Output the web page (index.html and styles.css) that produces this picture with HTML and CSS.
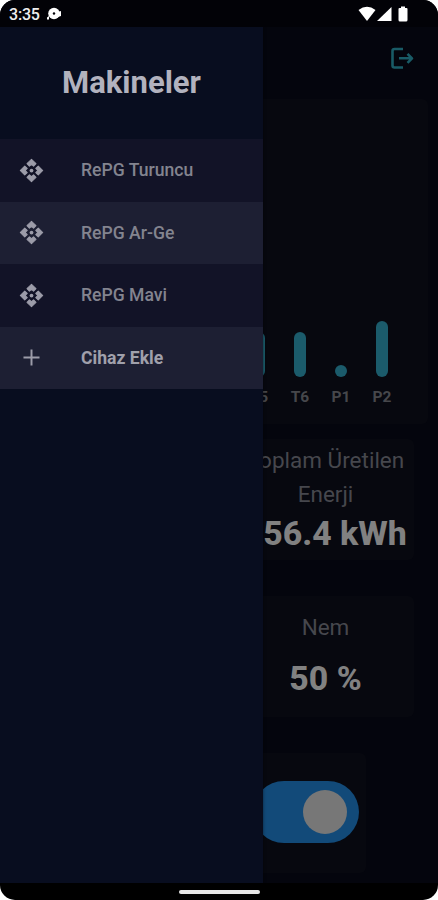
FILE: index.html
```html
<!DOCTYPE html>
<html lang="tr">
<head>
    <meta charset="UTF-8">
    <meta name="viewport" content="width=device-width, initial-scale=1.0">
    <title>Makineler</title>
    <link rel="stylesheet" href="styles.css">
</head>
<body>
    <svg class="sprite">
        <symbol id="icon-api" viewBox="0 0 24 24">
            <path stroke-width="1" stroke-linejoin="round" d="M12 1.2L16.3 5.500 14 7.900 12 6 10 7.900 7.700 5.500zM1.200 12L5.500 7.700 7.900 10 6 12 7.900 14 5.500 16.300zM22.800 12L18.500 16.300 16.100 14 18 12 16.100 10 18.500 7.700zM12 22.800L7.700 18.500 10 16.100 12 18 14 16.100 16.300 18.500z"/>
            <circle cx="12" cy="12" r="1.8" stroke="none"/>
        </symbol>
    </svg>

    <div class="phone">
        <div class="status-bar">
            <span class="clock">3:35</span>
            <svg class="notification" width="17" height="14" viewBox="0 0 17 14">
                <path d="M1 12.500v-2l2-1.500v3.500z"/>
                <circle cx="8" cy="6.500" r="5.800"/>
                <path d="M12 5l3-1v5l-3 1z"/>
                <circle class="hole" cx="8" cy="6.500" r="1.200"/>
            </svg>
            <svg class="signals" width="52" height="16" viewBox="0 0 52 16">
                <path d="M0.500 4Q9 -2.500 17.500 4L9 15z"/>
                <path d="M33.500 1v14h-14.500z"/>
                <path d="M41.500 2h1.500V0.500h4V2h1.500q1 0 1 1v11q0 1.500-1.500 1.500h-6q-1.500 0-1.500-1.500V3q0-1 1-1z"/>
            </svg>
        </div>

        <div class="screen">
            <div class="page">
                <div class="toolbar">
                    <svg class="logout" width="24" height="22" viewBox="0 0 24 22">
                        <path d="M13 2H4.500q-2 0-2 2v14.500q0 2 2 2H13M9 11.300h13M17.500 6.800l4.500 4.500-4.500 4.500"/>
                    </svg>
                </div>

                <div class="card chart">
                    <div class="column"><div class="bar" style="height: 45px"></div><span>T5</span></div>
                    <div class="column"><div class="bar" style="height: 45px"></div><span>T6</span></div>
                    <div class="column"><div class="bar" style="height: 12px"></div><span>P1</span></div>
                    <div class="column"><div class="bar" style="height: 56px"></div><span>P2</span></div>
                </div>

                <div class="card info energy">
                    <div class="label">Toplam Üretilen Enerji</div>
                    <div class="value">56.4 kWh</div>
                </div>

                <div class="card info humidity">
                    <div class="label">Nem</div>
                    <div class="value">50 %</div>
                </div>

                <div class="card power">
                    <div class="toggle"><div class="knob"></div></div>
                </div>
            </div>

            <div class="drawer">
                <h1>Makineler</h1>
                <div class="menu-item">
                    <svg class="icon"><use href="#icon-api"/></svg>
                    <span>RePG Turuncu</span>
                </div>
                <div class="menu-item">
                    <svg class="icon"><use href="#icon-api"/></svg>
                    <span>RePG Ar-Ge</span>
                </div>
                <div class="menu-item">
                    <svg class="icon"><use href="#icon-api"/></svg>
                    <span>RePG Mavi</span>
                </div>
                <div class="menu-item add">
                    <svg class="icon" viewBox="0 0 24 24"><path stroke-width="1.900" d="M12 4.300v15.400M4.300 12h15.400"/></svg>
                    <span>Cihaz Ekle</span>
                </div>
            </div>
        </div>

        <div class="nav-bar"><div class="handle"></div></div>
    </div>
</body>
</html>
```

FILE: styles.css
```css
* {
    box-sizing: border-box;
}
body {
    margin: 0;
    background: #fff;
    font-family: Roboto, sans-serif;
}
.sprite {
    display: none;
}
.phone {
    display: flex;
    flex-direction: column;
    width: 438px;
    height: 900px;
    background: #000;
    border-radius: 15px;
    overflow: hidden;
}

/* status bar */
.status-bar {
    display: flex;
    align-items: center;
    height: 27px;
    padding: 1px 28px 0 9px;
    background: #020207;
    color: #eee;
}
.clock {
    width: 31px;
    margin-right: 6px;
    font-size: 16px;
    font-weight: 500;
    letter-spacing: -0.2px;
}
.status-bar svg {
    fill: #fff;
}
.status-bar .hole {
    fill: #020207;
}
.signals {
    margin-left: auto;
}

.screen {
    position: relative;
    flex: 1;
    overflow: hidden;
    background: #04050d;
}
.page {
    display: flex;
    flex-direction: column;
    align-items: flex-end;
}
.toolbar {
    height: 72px;
    padding: 20px 24px 0 0;
}
.logout {
    fill: none;
    stroke: #195b66;
    stroke-width: 2.6;
    stroke-linejoin: round;
}
.card {
    background: #07080f;
    border-radius: 6px;
}

/* chart */
.chart {
    display: flex;
    justify-content: flex-end;
    align-items: flex-end;
    width: 418px;
    height: 325px;
    margin-right: 10px;
    padding: 0 25.5px 18px 0;
}
.column {
    display: flex;
    flex-direction: column;
    align-items: center;
    width: 41px;
    color: #46474b;
    font-size: 15.5px;
    font-weight: 700;
    line-height: 18px;
}
.bar {
    width: 12px;
    margin-bottom: 11px;
    background: #1b5b6b;
    border-radius: 6px;
}

/* info cards */
.info {
    width: 177px;
    height: 121px;
    margin-right: 24px;
    text-align: center;
}
.label {
    color: #46474d;
    font-size: 22.5px;
    line-height: 34px;
}
.value {
    color: #818181;
    font-size: 33.8px;
    font-weight: 800;
    line-height: 40px;
    white-space: nowrap;
}
.energy {
    margin-top: 15px;
    padding-top: 4px;
}
.energy .value {
    margin: 3px -6px 0 13px;
}
.humidity {
    margin-top: 36px;
    padding-top: 14px;
}
.humidity .value {
    margin-top: 15px;
}

.power {
    width: 120px;
    height: 120px;
    margin: 36px 72px 0 0;
    padding: 28px 7px;
}
.toggle {
    display: flex;
    justify-content: flex-end;
    align-items: center;
    height: 62px;
    padding-right: 12px;
    background: #124a79;
    border-radius: 31px;
}
.knob {
    width: 44px;
    height: 44px;
    background: #777;
    border-radius: 50%;
}

/* drawer over the page */
.drawer {
    position: absolute;
    top: 0;
    left: 0;
    width: 263px;
    height: 100%;
    background: #080d1f;
    box-shadow: 0 0 3px rgba(0, 0, 0, 0.5);
}
.drawer h1 {
    height: 112px;
    margin: 0;
    color: #b2b2be;
    font-size: 31px;
    font-weight: 700;
    line-height: 112px;
    text-align: center;
}
.menu-item {
    display: flex;
    align-items: center;
    height: 62.5px;
    padding: 0 0 0.5px 19px;
    background: #121327;
    color: #83848f;
    font-size: 17.6px;
    font-weight: 500;
}
.menu-item:nth-of-type(even) {
    background: #1d1f33;
}
.icon {
    width: 25px;
    height: 25px;
    margin-right: 37px;
    fill: #9c9ca9;
    stroke: #9c9ca9;
}
.add {
    color: #a0a0ab;
    font-weight: 700;
}

.nav-bar {
    display: flex;
    justify-content: center;
    height: 17px;
    padding-top: 7px;
}
.handle {
    width: 81px;
    height: 4px;
    background: #e8e8e8;
    border-radius: 2px;
}
```
